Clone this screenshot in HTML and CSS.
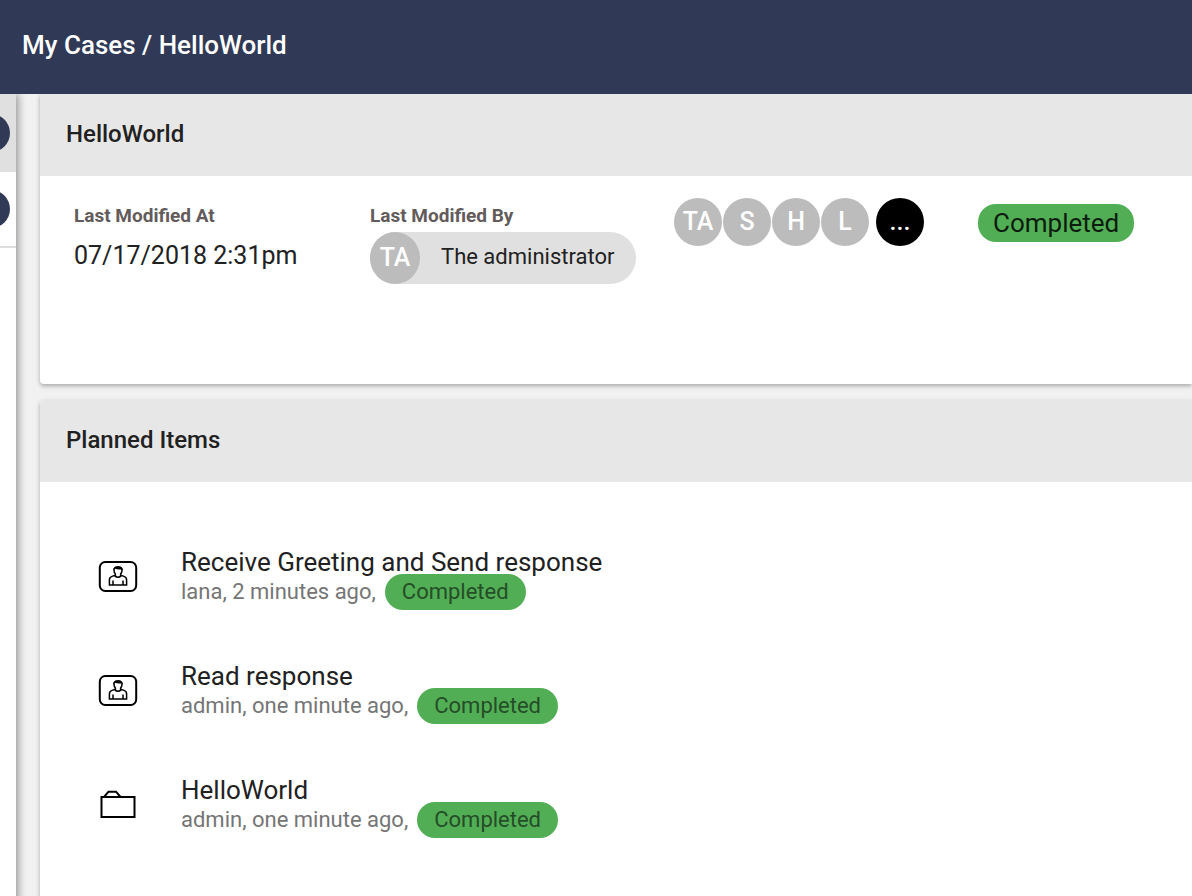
FILE: index.html
```html
<!DOCTYPE html>
<html lang="en">
<head>
<meta charset="utf-8">
<title>My Cases / HelloWorld</title>
<link rel="stylesheet" href="styles.css">
</head>
<body>
<header class="topbar"><h1 class="crumbs">My Cases / HelloWorld</h1></header>
<div class="layout">
  <aside class="sidebar">
    <div class="side-item selected"><span class="side-dot"></span></div>
    <div class="side-item"><span class="side-dot"></span></div>
  </aside>
  <main class="content">
    <section class="card summary">
      <h2 class="card-title">HelloWorld</h2>
      <div class="details">
        <div class="field modified-at">
          <span class="label">Last Modified At</span>
          <time class="value">07/17/2018 2:31pm</time>
        </div>
        <div class="field modified-by">
          <span class="label">Last Modified By</span>
          <div class="chip"><span class="avatar large">TA</span><span class="chip-name">The administrator</span></div>
        </div>
        <div class="people">
          <span class="avatar">TA</span>
          <span class="avatar">S</span>
          <span class="avatar">H</span>
          <span class="avatar">L</span>
          <button class="avatar more" type="button" aria-label="More people">...</button>
        </div>
        <span class="status">Completed</span>
      </div>
    </section>
    <section class="card planned">
      <h2 class="card-title">Planned Items</h2>
      <ul class="items">
        <li class="item">
          <svg class="icon" viewBox="0 0 40 40" aria-hidden="true">
            <rect class="frame" x="1.8" y="6" width="36.4" height="29" rx="5.5"/>
            <path class="person" d="M11.4 29V24Q11.4 21.2 14 20.4L17.4 19.3V18Q16 16.5 16 14Q15.8 11 20 11Q24.2 11 24 14Q24 16.5 22.6 18V19.3L26 20.4Q28.6 21.2 28.6 24V29ZM16.6 19.6Q20 22.8 23.4 19.6M15 24.5V29M25 24.5V29"/>
            <path d="M15.4 14.5Q14.8 10.4 20 10.2Q25.2 10.4 24.6 14.5Q23.6 13.3 21.8 13.5Q19 13.7 17.2 12.7Z"/>
          </svg>
          <div class="item-text">
            <h3 class="item-title">Receive Greeting and Send response</h3>
            <p class="item-meta">lana, 2 minutes ago, <span class="status small">Completed</span></p>
          </div>
        </li>
        <li class="item">
          <svg class="icon" viewBox="0 0 40 40" aria-hidden="true">
            <rect class="frame" x="1.8" y="6" width="36.4" height="29" rx="5.5"/>
            <path class="person" d="M11.4 29V24Q11.4 21.2 14 20.4L17.4 19.3V18Q16 16.5 16 14Q15.8 11 20 11Q24.2 11 24 14Q24 16.5 22.6 18V19.3L26 20.4Q28.6 21.2 28.6 24V29ZM16.6 19.6Q20 22.8 23.4 19.6M15 24.5V29M25 24.5V29"/>
            <path d="M15.4 14.5Q14.8 10.4 20 10.2Q25.2 10.4 24.6 14.5Q23.6 13.3 21.8 13.5Q19 13.7 17.2 12.7Z"/>
          </svg>
          <div class="item-text">
            <h3 class="item-title">Read response</h3>
            <p class="item-meta">admin, one minute ago, <span class="status small">Completed</span></p>
          </div>
        </li>
        <li class="item">
          <svg class="icon" viewBox="0 0 40 40" aria-hidden="true">
            <path class="folder" d="M3.5 13H36.5V33H3.5ZM6 13L10.5 7.7H18L22.5 13"/>
          </svg>
          <div class="item-text">
            <h3 class="item-title">HelloWorld</h3>
            <p class="item-meta">admin, one minute ago, <span class="status small">Completed</span></p>
          </div>
        </li>
      </ul>
    </section>
  </main>
</div>
</body>
</html>
```
FILE: styles.css
```css
* { box-sizing: border-box; }
body {
  margin: 0;
  min-height: 100vh;
  display: flex;
  flex-direction: column;
  overflow-x: hidden;
  background: #f1f1f1;
  color: #212121;
  font-family: Roboto, sans-serif;
}
h1, h2, h3, p, ul { margin: 0; padding: 0; }
.topbar {
  background: #303956;
  color: #fff;
  padding: 29px 22px 33px;
}
.crumbs { font-size: 26px; line-height: 32px; font-weight: 500; }
.layout { flex: 1; display: flex; }
.sidebar {
  flex: 0 0 16px;
  min-width: 0;
  background: #fff;
  box-shadow: 2px 0 8px rgba(0, 0, 0, .4);
  clip-path: inset(0 -16px 0 0);
}
.side-item {
  height: 76px;
  display: flex;
  align-items: center;
  justify-content: flex-end;
  padding-right: 6px;
  overflow: hidden;
  border-bottom: 2px solid #ddd;
}
.side-item.selected { height: 78px; background: #e0e0e0; border-bottom: 0; }
.side-dot { flex: none; width: 38px; height: 38px; border-radius: 50%; background: #303956; }
.content {
  flex: 1;
  min-width: 0;
  display: flex;
  flex-direction: column;
  gap: 16px;
  padding-left: 24px;
}
.card { background: #fff; box-shadow: 0 2px 4px rgba(0, 0, 0, .3); }
.summary { border-bottom-left-radius: 4px; clip-path: inset(0 0 -10px -10px); }
.planned { flex: 1; border-top-left-radius: 4px; }
.card-title {
  padding: 24px 26px 26px;
  background: #e7e7e7;
  border-top-left-radius: inherit;
  font-size: 24px;
  line-height: 32px;
  font-weight: 500;
}
.summary .card-title { border-radius: 0; }
.details { display: flex; align-items: flex-start; min-height: 208px; padding: 22px 34px; }
.field { display: flex; flex: none; flex-direction: column; align-items: flex-start; padding-top: 6px; }
.modified-at { width: 296px; }
.modified-by { width: 304px; }
.label { font-size: 19px; line-height: 24px; font-weight: 700; color: #635b5b; }
.value { margin-top: 12px; font-size: 25px; line-height: 32px; }
.chip {
  display: flex;
  align-items: center;
  margin-top: 4px;
  padding-right: 22px;
  border-radius: 26px;
  background: #e0e0e0;
}
.chip-name { margin: 0 0 2px 21px; font-size: 22px; line-height: 28px; }
.people { display: flex; flex: none; gap: 1px; width: 304px; }
.avatar {
  display: flex;
  align-items: center;
  justify-content: center;
  flex: none;
  width: 48px;
  height: 48px;
  border: 0;
  padding: 0;
  border-radius: 50%;
  background: #bcbcbc;
  color: #fff;
  font: 500 25px/32px Roboto, sans-serif;
}
.avatar.large { width: 50px; height: 52px; }
.avatar.more { margin-left: 6px; background: #000; }
.status {
  display: inline-block;
  margin-top: 6px;
  padding: 3px 15px;
  border-radius: 18px;
  background: #51ae55;
  color: #0d1b0e;
  font-size: 26px;
  line-height: 32px;
}
.items { list-style: none; padding: 60px 58px; display: flex; flex-direction: column; gap: 38px; }
.item { display: flex; align-items: center; gap: 43px; height: 76px; }
.icon { flex: none; width: 40px; height: 40px; margin-bottom: 8px; }
.item-text { margin-bottom: 4px; }
.frame, .folder { fill: none; stroke: #000; stroke-width: 2; }
.person { fill: none; stroke: #000; stroke-width: 1.5; }
.item-title { font-size: 26px; line-height: 32px; font-weight: 400; }
.item-meta { display: flex; align-items: center; gap: 9px; height: 36px; margin-top: -4px; font-size: 22px; line-height: 28px; color: #757575; }
.status.small { margin: 0; padding: 4px 17px; font-size: 22px; line-height: 28px; color: #254d27; }
```
